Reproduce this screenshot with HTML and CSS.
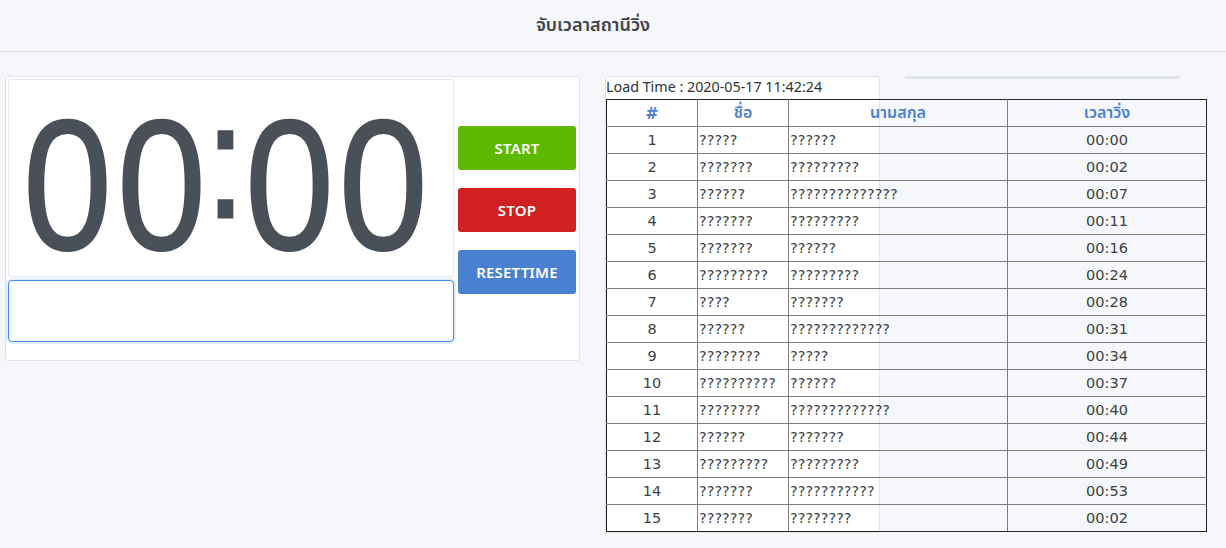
FILE: index.html
```html
<!DOCTYPE html>
<html lang="th">
<head>
<meta charset="utf-8">
<title>จับเวลาสถานีวิ่ง</title>
<link rel="stylesheet" href="styles.css">
</head>
<body>
<header class="topbar"><h1 class="title">จับเวลาสถานีวิ่ง</h1></header>
<main class="grid">
  <section class="card timer-card">
    <div class="timer-left">
      <div class="clock"><span class="digits"><span class="d">0</span><span class="d">0</span><span class="colon">:</span><span class="d">0</span><span class="d">0</span></span></div>
      <textarea class="entry"></textarea>
    </div>
    <div class="btns">
      <button class="btn start">START</button>
      <button class="btn stop">STOP</button>
      <button class="btn reset">RESETTIME</button>
    </div>
  </section>
  <section class="card list-card">
    <div class="loadtime">Load Time : 2020-05-17 11:42:24</div>
    <table class="results">
      <colgroup><col class="c1"><col class="c2"><col class="c3"><col class="c4"></colgroup>
      <thead><tr><th>#</th><th>ชื่อ</th><th>นามสกุล</th><th>เวลาวิ่ง</th></tr></thead>
      <tbody>
        <tr><td class="n">1</td><td>?????</td><td>??????</td><td class="t">00:00</td></tr>
        <tr><td class="n">2</td><td>???????</td><td>?????????</td><td class="t">00:02</td></tr>
        <tr><td class="n">3</td><td>??????</td><td>??????????????</td><td class="t">00:07</td></tr>
        <tr><td class="n">4</td><td>???????</td><td>?????????</td><td class="t">00:11</td></tr>
        <tr><td class="n">5</td><td>???????</td><td>??????</td><td class="t">00:16</td></tr>
        <tr><td class="n">6</td><td>?????????</td><td>?????????</td><td class="t">00:24</td></tr>
        <tr><td class="n">7</td><td>????</td><td>???????</td><td class="t">00:28</td></tr>
        <tr><td class="n">8</td><td>??????</td><td>?????????????</td><td class="t">00:31</td></tr>
        <tr><td class="n">9</td><td>????????</td><td>?????</td><td class="t">00:34</td></tr>
        <tr><td class="n">10</td><td>??????????</td><td>??????</td><td class="t">00:37</td></tr>
        <tr><td class="n">11</td><td>????????</td><td>?????????????</td><td class="t">00:40</td></tr>
        <tr><td class="n">12</td><td>??????</td><td>???????</td><td class="t">00:44</td></tr>
        <tr><td class="n">13</td><td>?????????</td><td>?????????</td><td class="t">00:49</td></tr>
        <tr><td class="n">14</td><td>???????</td><td>???????????</td><td class="t">00:53</td></tr>
        <tr><td class="n">15</td><td>???????</td><td>????????</td><td class="t">00:02</td></tr>
      </tbody>
    </table>
  </section>
  <section class="side"><div class="side-line"></div></section>
</main>
</body>
</html>
```

FILE: styles.css
```css
* { box-sizing: border-box; }
html, body { margin: 0; padding: 0; }
body {
  background: #f5f7fb;
  font-family: "Noto Sans Thai", "Noto Sans", "DejaVu Sans", sans-serif;
  color: #3d4248;
  width: 1226px;
  height: 548px;
  overflow: hidden;
}
.topbar {
  height: 52px;
  border-bottom: 1px solid #dde0e6;
  display: flex;
  align-items: center;
  justify-content: center;
}
.title {
  margin: 0;
  font-size: 18px;
  font-weight: 600;
  color: #3f444a;
  transform: translateX(-20px);
}
.grid {
  display: grid;
  grid-template-columns: 275px 275px 275px 275px;
  column-gap: 25px;
  padding: 24px 0 0 5px;
  align-items: start;
}
.card {
  background: #fff;
  border: 1px solid #dfe3ea;
  border-radius: 3px;
}
.timer-card {
  grid-column: span 2;
  display: flex;
  padding: 2px 3px 18px 2px;
  height: 285px;
}
.timer-left {
  width: 446px;
  display: flex;
  flex-direction: column;
  gap: 3px;
}
.clock {
  height: 198px;
  border: 1px solid #e6e8ed;
  border-radius: 3px;
  display: flex;
  align-items: center;
  justify-content: flex-start;
  padding-left: 14px;
}
.digits {
  display: block;
  font-family: "Liberation Sans", Arial, sans-serif;
  font-weight: 400;
  font-size: 160px;
  line-height: 1;
  height: 160px;
  color: #4a5058;
  transform: scaleY(1.157);
  margin-top: 14px;
  white-space: nowrap;
  -webkit-text-stroke: 1.6px #4a5058;
}
.d + .d { margin-left: 5px; }
.colon {
  font-size: 140px;
  line-height: 0;
  vertical-align: 27px;
  -webkit-text-stroke: 2.4px #4a5058;
}
.entry {
  height: 62px;
  border: 1px solid #3b8fe6;
  border-radius: 4px;
  box-shadow: 0 0 0 2px rgba(59,143,230,0.15);
  resize: none;
  outline: none;
  font-family: inherit;
}
.btns {
  flex: 1;
  display: flex;
  flex-direction: column;
  gap: 18px;
  padding: 47px 0 0 4px;
}
.btn {
  height: 44px;
  border: none;
  border-radius: 3px;
  color: #fff;
  font-family: "Noto Sans", "DejaVu Sans", sans-serif;
  font-weight: 600;
  font-size: 15px;
  letter-spacing: 0.2px;
}
.start { background: #5cb900; }
.stop { background: #d0201f; }
.reset { background: #4a80d0; }
.list-card { padding: 0; }
.loadtime {
  font-size: 14.3px;
  height: 22px;
  line-height: 22px;
  color: #2f3338;
  white-space: nowrap;
}
.results {
  width: 600px;
  border-collapse: collapse;
  table-layout: fixed;
  border: 1px solid #222;
  font-family: "DejaVu Sans", "Noto Sans Thai", sans-serif;
  font-size: 14.5px;
}
.c1 { width: 91px; }
.c2 { width: 91px; }
.c3 { width: 219px; }
.c4 { width: 199px; }
.results th, .results td {
  border: 1px solid #7d7d7d;
  height: 27px;
  padding: 0 1px;
  white-space: nowrap;
}
.results thead th {
  border-top: 1px solid #222;
  color: #4a7fd4;
  font-weight: 600;
  font-size: 16px;
  text-align: center;
}
.results th:first-child, .results td:first-child { border-left: 1px solid #222; }
.results th:last-child, .results td:last-child { border-right: 1px solid #222; }
.results tbody tr:last-child td { border-bottom: 1px solid #222; }
.results td { color: #3b3f45; text-align: left; }
.results td.n, .results td.t { text-align: center; }
.side-line {
  height: 3px;
  background: #e1e5eb;
}
```
